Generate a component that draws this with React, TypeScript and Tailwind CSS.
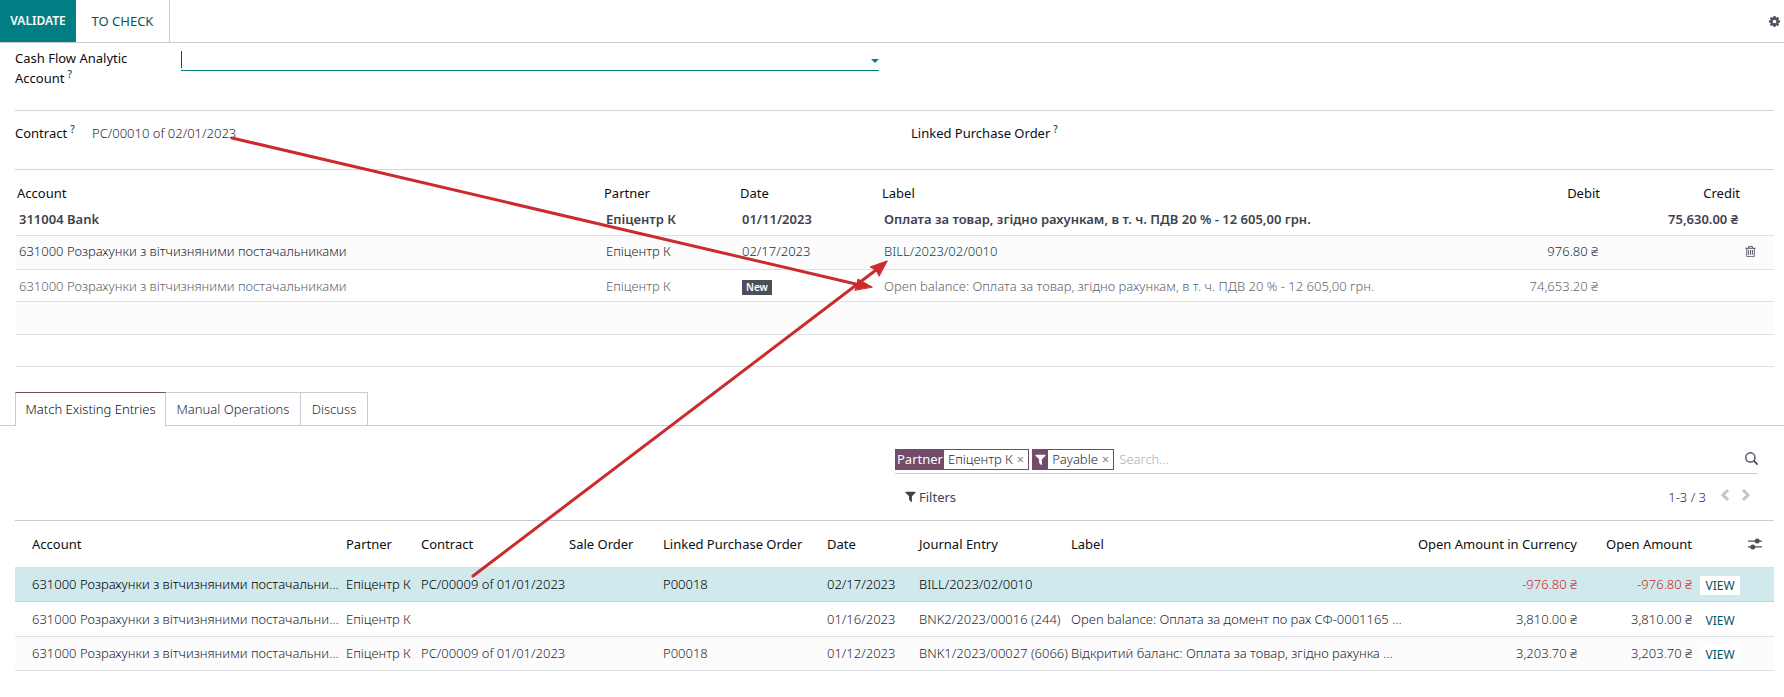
import React from "react";

const FILTER =
  "M1595 295q17 41-14 70l-493 493v742q0 42-39 59-13 5-25 5-27 0-45-19l-256-256q-19-19-19-45v-486l-493-493q-31-29-14-70 17-39 59-39h1280q42 0 59 39z";
const COG =
  "M1152 896q0-106-75-181t-181-75-181 75-75 181 75 181 181 75 181-75 75-181zm512-109v222q0 12-8 23t-20 13l-185 28q-19 54-39 91 35 50 107 138 10 12 10 25t-9 23q-27 37-99 108t-94 71q-12 0-26-9l-138-108q-44 23-91 38-16 136-29 186-7 28-36 28h-222q-14 0-24.5-8.500t-11.500-21.500l-28-184q-49-16-90-37l-141 107q-10 9-25 9-14 0-25-11-126-114-165-168-7-10-7-23 0-12 8-23 15-21 51-66.500t54-70.500q-27-50-41-99l-183-27q-13-2-21-12.500t-8-23.500v-222q0-12 8-23t19-13l186-28q14-46 39-92-40-57-107-138-10-12-10-24 0-10 9-23 26-36 98.500-107.500t94.500-71.500q13 0 26 10l138 107q44-23 91-38 16-136 29-186 7-28 36-28h222q14 0 24.500 8.500t11.500 21.500l28 184q49 16 90 37l142-107q9-9 24-9 13 0 25 10 129 119 165 170 7 8 7 22 0 12-8 23-15 21-51 66.500t-54 70.500q26 50 41 98l183 28q13 2 21 12.500t8 23.500z";
const TRASH =
  "M704 736v576q0 14-9 23t-23 9h-64q-14 0-23-9t-9-23v-576q0-14 9-23t23-9h64q14 0 23 9t9 23zm256 0v576q0 14-9 23t-23 9h-64q-14 0-23-9t-9-23v-576q0-14 9-23t23-9h64q14 0 23 9t9 23zm256 0v576q0 14-9 23t-23 9h-64q-14 0-23-9t-9-23v-576q0-14 9-23t23-9h64q14 0 23 9t9 23zm128 724v-948h-896v948q0 22 7 40.500t14.500 27 10.500 8.500h832q3 0 10.500-8.500t14.500-27 7-40.500zm-672-1076h448l-48-117q-7-9-17-11h-317q-10 2-17 11zm928 32v64q0 14-9 23t-23 9h-96v948q0 83-47 143.500t-113 60.500h-832q-66 0-113-58.500t-47-141.500v-952h-96q-14 0-23-9t-9-23v-64q0-14 9-23t23-9h309l70-167q15-37 54-63t79-26h320q40 0 79 26t54 63l70 167h309q14 0 23 9t9 23z";

function Glyph({ d, className }: { d: string; className: string }) {
  return (
    <svg viewBox="0 0 1792 1792" fill="currentColor" className={className} aria-hidden="true">
      <path d={d} />
    </svg>
  );
}

function Chevron({ points }: { points: string }) {
  return (
    <svg viewBox="0 0 10 14" className="h-[14px] w-[10px]" fill="none" stroke="currentColor" strokeWidth="3" aria-hidden="true">
      <polyline points={points} />
    </svg>
  );
}

function Help() {
  return <sup className="ml-[3px] text-[10px] font-medium text-[#01565b]">?</sup>;
}

function Facet({ label, icon, children }: { label?: string; icon?: boolean; children: string }) {
  return (
    <div className="flex h-[21px] items-center border border-[#714b67] bg-white">
      <span className="flex h-full items-center bg-[#714b67] px-px font-normal text-white">
        {icon ? <Glyph d={FILTER} className="h-[13px] w-[13px]" /> : label}
      </span>
      <span className="pl-1">{children}</span>
      <button aria-label={`Remove ${children}`} className="px-1 text-[13px] font-normal leading-4 text-[#85878e]">
        ×
      </button>
    </div>
  );
}

type Entry = {
  contract: string;
  order: string;
  date: string;
  journal: string;
  label: string;
  amount: string;
  row: string;
  amountColor: string;
};

const entries: Entry[] = [
  {
    contract: "PC/00009 of 01/01/2023",
    order: "P00018",
    date: "02/17/2023",
    journal: "BILL/2023/02/0010",
    label: "",
    amount: "-976.80 ₴",
    row: "h-[34px] border-b border-[#b9d1d7] bg-[#cfe9ed] text-black",
    amountColor: "text-[#d2231f]",
  },
  {
    contract: "",
    order: "",
    date: "01/16/2023",
    journal: "BNK2/2023/00016 (244)",
    label: "Open balance: Оплата за домент по рах СФ-0001165 від 16.01.2023",
    amount: "3,810.00 ₴",
    row: "h-[35px] border-b border-[#dee0e4]",
    amountColor: "",
  },
  {
    contract: "PC/00009 of 01/01/2023",
    order: "P00018",
    date: "01/12/2023",
    journal: "BNK1/2023/00027 (6066)",
    label: "Відкритий баланс: Оплата за товар, згідно рахунка № 12 605,00 грн.",
    amount: "3,203.70 ₴",
    row: "h-[34px] border-b border-[#dee0e4] bg-[#fcfcfc]",
    amountColor: "",
  },
];

const ACCOUNT = "631000 Розрахунки з вітчизняними постачальниками";

export default function App() {
  return (
    <div className="relative min-h-screen overflow-x-hidden bg-white font-['Noto_Sans','Open_Sans',sans-serif] text-[13px] font-light leading-5 text-[#262936]">
      <header className="flex h-[43px] items-stretch border-b border-[#c9ccd2]">
        <button className="w-[76px] bg-[#017e84] text-center text-[12px] font-semibold text-white">VALIDATE</button>
        <button className="w-[94px] border-r border-[#c9ccd2] text-center text-[13px] font-normal text-[#01565b]">
          TO CHECK
        </button>
        <button aria-label="Settings" className="ml-auto mr-[3px] w-[13px] text-[#4c4f5b]">
          <Glyph d={COG} className="h-[13px] w-[13px]" />
        </button>
      </header>

      <main>
        <section className="ml-[15px] mr-[10px] flex h-[68px] items-start border-b border-[#d2d4d8] pt-[5px]">
          <label htmlFor="analytic" className="w-[166px] pr-5 font-normal text-[#0c0e12]">
            Cash Flow Analytic Account
            <Help />
          </label>
          <div className="flex h-[23px] w-[698px] items-center border-b border-[#017e84]">
            <span className="h-[17px] w-px bg-[#374151]" />
            <input id="analytic" className="h-5 min-w-0 flex-1 bg-transparent outline-none" />
            <svg viewBox="0 0 8 4" className="mt-1 h-1 w-2" fill="#017e84" aria-hidden="true">
              <path d="M0 0h8L4 4z" />
            </svg>
          </div>
        </section>

        <section className="ml-[15px] mr-[10px] grid h-[59px] grid-cols-[896px_1fr] border-b border-[#d2d4d8] pt-3">
          <div className="flex">
            <span className="w-[77px] font-normal text-[#0c0e12]">
              Contract
              <Help />
            </span>
            <span>PC/00010 of 02/01/2023</span>
          </div>
          <span className="font-normal text-[#0c0e12]">
            Linked Purchase Order
            <Help />
          </span>
        </section>

        <div className="ml-4 mr-[10px]">
          <table className="w-full table-fixed border-collapse text-left">
            <colgroup>
              <col className="w-[587px]" />
              <col className="w-[136px]" />
              <col className="w-[142px]" />
              <col />
              <col className="w-[180px]" />
              <col className="w-[140px]" />
              <col className="w-[33px]" />
            </colgroup>
            <thead>
              <tr className="h-[33px] text-[#0c0e12] [&>th]:px-px [&>th]:pt-3 [&>th]:font-normal">
                <th>Account</th>
                <th>Partner</th>
                <th>Date</th>
                <th>Label</th>
                <th className="text-right">Debit</th>
                <th className="text-right">Credit</th>
                <th></th>
              </tr>
            </thead>
            <tbody className="[&_td]:whitespace-nowrap [&_td]:px-[3px]">
              <tr className="h-[32px] border-b border-[#dee0e4] font-semibold text-[#3f424e]">
                <td>311004 Bank</td>
                <td>Епіцентр К</td>
                <td>01/11/2023</td>
                <td>Оплата за товар, згідно рахункам, в т. ч. ПДВ 20 % - 12 605,00 грн.</td>
                <td></td>
                <td className="text-right">75,630.00 ₴</td>
                <td></td>
              </tr>
              <tr className="h-[34px] border-b border-[#dee0e4] bg-[#fcfcfc] [&>td]:pb-[2px]">
                <td>{ACCOUNT}</td>
                <td>Епіцентр К</td>
                <td>02/17/2023</td>
                <td>
                  <a href="#bill" className="text-[#01464b]">
                    BILL/2023/02/0010
                  </a>
                </td>
                <td className="text-right">976.80 ₴</td>
                <td></td>
                <td>
                  <button aria-label="Delete" className="mt-px block text-[#4c4f5b]">
                    <Glyph d={TRASH} className="h-[13px] w-[13px]" />
                  </button>
                </td>
              </tr>
              <tr className="h-[32px] border-b border-[#dee0e4] text-[#62656f] [&>td]:pt-px">
                <td>{ACCOUNT}</td>
                <td>Епіцентр К</td>
                <td>
                  <span className="inline-block bg-[#4c4f5b] px-1 text-[10px] font-semibold leading-[15px] text-white">New</span>
                </td>
                <td>Open balance: Оплата за товар, згідно рахункам, в т. ч. ПДВ 20 % - 12 605,00 грн.</td>
                <td className="text-right">74,653.20 ₴</td>
                <td></td>
                <td></td>
              </tr>
              <tr className="h-[33px] border-b border-[#dee0e4] bg-[#fcfcfc]">
                <td colSpan={7}></td>
              </tr>
              <tr className="h-[32px] border-b border-[#dee0e4]">
                <td colSpan={7}></td>
              </tr>
            </tbody>
          </table>
        </div>

        <nav className="mt-[25px] flex h-[34px] items-stretch">
          <span className="w-[15px] border-b border-[#c9ccd2]" />
          <button className="w-[151px] border-x border-t border-[#c9ccd2] border-t-[#714b67] text-[#0c0e12]">
            Match Existing Entries
          </button>
          <button className="w-[135px] border-y border-r border-[#c9ccd2]">Manual Operations</button>
          <button className="w-[67px] border-y border-r border-[#c9ccd2]">Discuss</button>
          <span className="flex-1 border-b border-[#c9ccd2]" />
        </nav>

        <section className="ml-[895px] mr-[26px]">
          <div className="flex h-[48px] items-end gap-[3px] border-b border-[#c9ccd2] pb-[3px]">
            <Facet label="Partner">Епіцентр К</Facet>
            <Facet icon>Payable</Facet>
            <input
              aria-label="Search"
              placeholder="Search..."
              className="ml-[2px] h-[21px] min-w-0 flex-1 outline-none placeholder:text-[#a9adb5]"
            />
            <button aria-label="Search entries" className="mb-[5px]">
              <svg viewBox="0 0 13 13" className="h-[13px] w-[13px]" fill="none" stroke="#4c4f5b" strokeWidth="1.4" aria-hidden="true">
                <circle cx="5.400" cy="5.400" r="4.600" />
                <path d="M8.700 8.700l3.900 3.900" strokeWidth="1.800" />
              </svg>
            </button>
          </div>
          <div className="flex h-[46px] items-center pl-[9px]">
            <button className="flex items-center gap-[2px] font-normal text-[#3f424e]">
              <Glyph d={FILTER} className="h-[13px] w-[13px]" />
              Filters
            </button>
            <span className="ml-auto">1-3 / 3</span>
            <span className="ml-[14px] mr-[7px] flex gap-[11px] pb-1 text-[#c3c5cc]">
              <button aria-label="Previous page">
                <Chevron points="8,2 3,7 8,12" />
              </button>
              <button aria-label="Next page">
                <Chevron points="2,2 7,7 2,12" />
              </button>
            </span>
          </div>
        </section>

        <div className="ml-[15px] mr-[10px] border-t border-[#c9ccd2]">
          <table className="w-full table-fixed border-collapse text-left">
            <colgroup>
              <col className="w-[326px]" />
              <col className="w-[75px]" />
              <col className="w-[148px]" />
              <col className="w-[94px]" />
              <col className="w-[164px]" />
              <col className="w-[92px]" />
              <col className="w-[152px]" />
              <col />
              <col className="w-[172px]" />
              <col className="w-[115px]" />
              <col className="w-[49px]" />
              <col className="w-[33px]" />
            </colgroup>
            <thead>
              <tr className="h-[47px] border-b border-[#dee0e4] text-[#0c0e12] [&>th]:whitespace-nowrap [&>th]:pl-[5px] [&>th]:font-normal">
                <th>
                  <span className="pl-3">Account</span>
                </th>
                <th>Partner</th>
                <th>Contract</th>
                <th>Sale Order</th>
                <th>Linked Purchase Order</th>
                <th>Date</th>
                <th>Journal Entry</th>
                <th>Label</th>
                <th className="text-right">Open Amount in Currency</th>
                <th className="text-right">Open Amount</th>
                <th></th>
                <th>
                  <button aria-label="Optional columns" className="ml-[2px] block text-[#4c4f5b]">
                    <svg viewBox="0 0 14 12" className="h-3 w-[14px]" fill="currentColor" aria-hidden="true">
                      <path d="M0 2.500h14v1.300H0zM0 8.300h14v1.300H0z" />
                      <circle cx="9.200" cy="3.100" r="2.500" />
                      <circle cx="4.800" cy="9" r="2.500" />
                    </svg>
                  </button>
                </th>
              </tr>
            </thead>
            <tbody className="[&_td]:whitespace-nowrap [&_td]:pb-px [&_td]:pl-[5px]">
              {entries.map((e) => (
                <tr key={e.date} className={e.row}>
                  <td>
                    <div className="truncate pl-3">{ACCOUNT}</div>
                  </td>
                  <td>Епіцентр К</td>
                  <td>{e.contract}</td>
                  <td></td>
                  <td>{e.order}</td>
                  <td>{e.date}</td>
                  <td>{e.journal}</td>
                  <td>
                    <div className="truncate">{e.label}</div>
                  </td>
                  <td className="text-right">
                    <span className={e.amountColor}>{e.amount}</span>
                  </td>
                  <td className="text-right">
                    <span className={e.amountColor}>{e.amount}</span>
                  </td>
                  <td>
                    <button className="ml-[3px] mt-[3px] block h-[19px] w-10 bg-white text-[12px] font-normal leading-[19px] text-[#01565b]">
                      VIEW
                    </button>
                  </td>
                  <td></td>
                </tr>
              ))}
            </tbody>
          </table>
        </div>
      </main>

      <svg
        viewBox="0 0 1784 697"
        className="pointer-events-none absolute left-0 top-0 h-[697px] w-[1784px]"
        fill="#cc2b2b"
        stroke="#cc2b2b"
        strokeLinecap="round"
        aria-hidden="true"
      >
        <path d="M232 138L860 285" strokeWidth="3" fill="none" />
        <path d="M872 287L858 279L857 284L855 290Z" strokeWidth="1" />
        <path d="M473 576L876 270" strokeWidth="3" fill="none" />
        <path d="M887 261L870 267L876 270L879 276Z" strokeWidth="1" />
      </svg>
    </div>
  );
}
